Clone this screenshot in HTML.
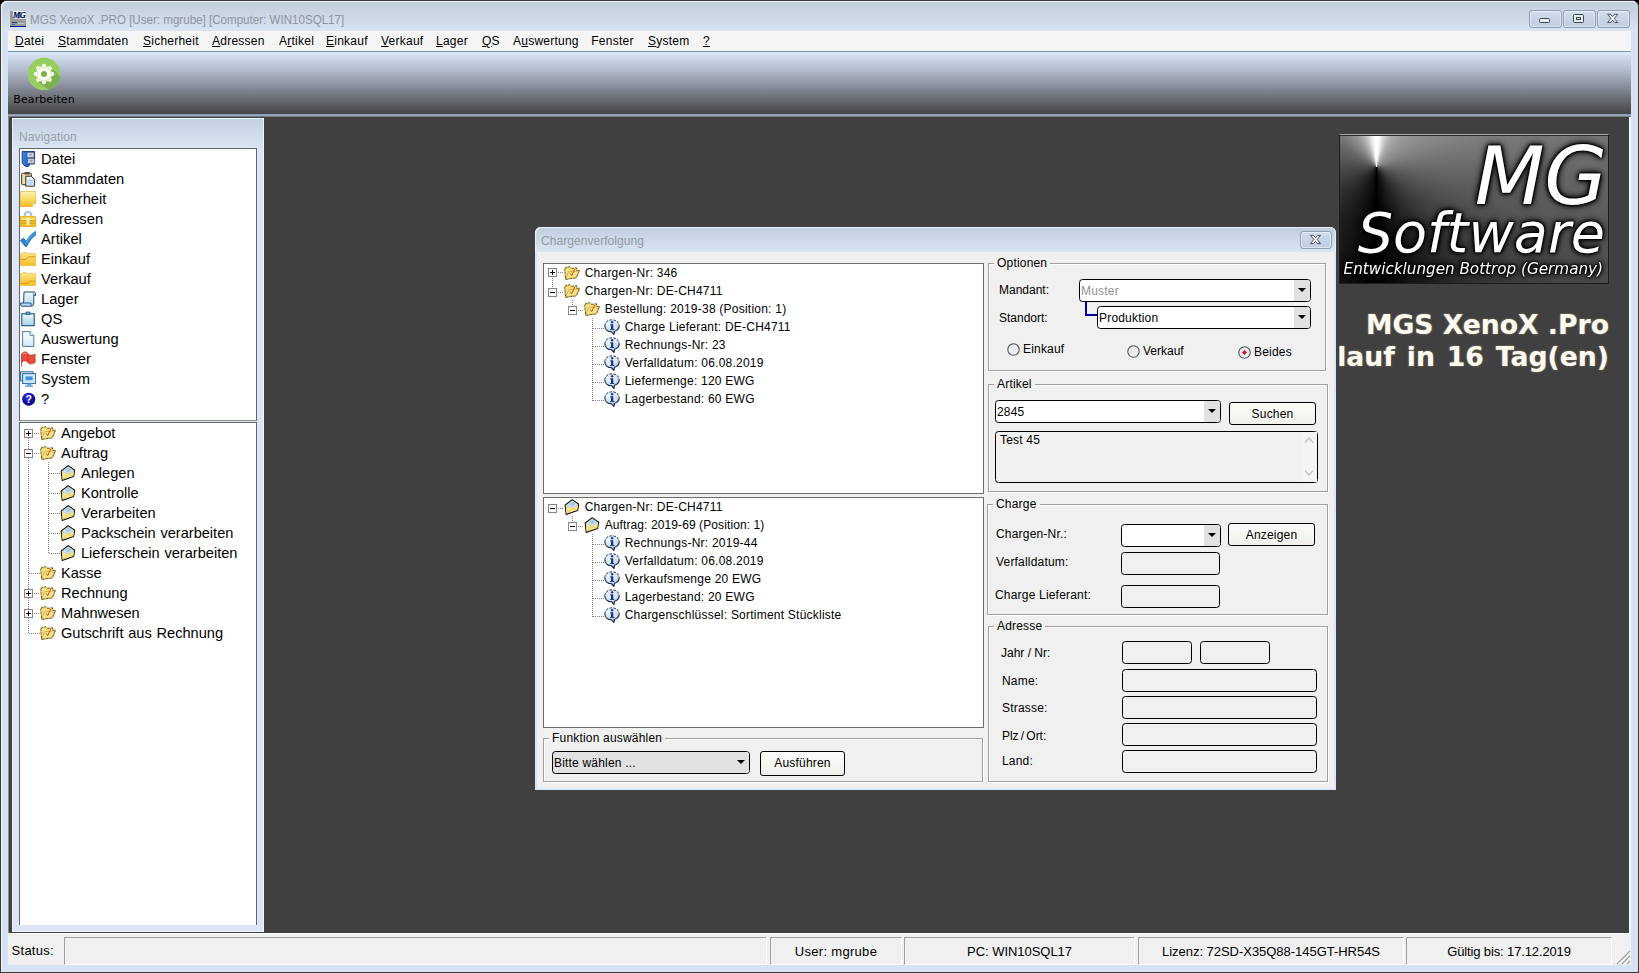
<!DOCTYPE html><html lang="de"><head><meta charset="utf-8"><title>MGS XenoX .PRO</title><style>
html,body{margin:0;padding:0}
body{width:1639px;height:973px;overflow:hidden;background:#000;position:relative;font-family:'Liberation Sans',sans-serif;font-size:12px;color:#000}
.t{position:absolute;white-space:nowrap}
div,svg{box-sizing:border-box}
.hd{position:absolute;height:1px;background:repeating-linear-gradient(90deg,#808080 0 1px,transparent 1px 2px)}
.vd{position:absolute;width:1px;background:repeating-linear-gradient(180deg,#808080 0 1px,transparent 1px 2px)}
.grp{position:absolute;border:1px solid #a0a0a0;box-shadow:inset 1px 1px 0 #fff,1px 1px 0 #fff}
.glab{position:absolute;background:#f0f0f0;white-space:nowrap;padding:0 3px;line-height:14px;height:14px;letter-spacing:0.19px}
.fld{position:absolute;border:1px solid #000;border-radius:3.5px;background:#f0f0f0}
.cmb{position:absolute;border:1px solid #000;border-radius:3.5px;background:#fff;overflow:hidden}
.cmb i{position:absolute;right:0;top:0;bottom:0;width:16px;background:#e1e1e1}
.cmb i:after{content:"";position:absolute;left:4px;top:8px;border:4px solid transparent;border-top:4px solid #000;border-bottom:none}
.btn{position:absolute;border:1px solid #000;border-radius:3px;background:linear-gradient(#fbfbf9,#f1f1ec);text-align:center;letter-spacing:0.19px}
.sp{position:absolute;top:937px;height:28px;border:1px solid;border-color:#a0a0a0 #fff #fff #a0a0a0;font-size:13px;line-height:28px;letter-spacing:-0.15px;text-align:center;white-space:nowrap}
.wb{position:absolute;top:10px;width:33px;height:18px;border:1px solid #8f9fb4;border-radius:3px;background:linear-gradient(#d2deec,#c6d4e5 50%,#c0cfe2);box-shadow:inset 0 0 0 1px rgba(255,255,255,.45)}
</style></head><body>
<div style="position:absolute;left:0px;top:0px;width:1639px;height:973px;background:#d6e3f2;border:1px solid #3a3a3a;border-radius:7px 7px 0 0;box-shadow:inset 1px 1px 0 #f4f8fc"></div>
<div style="position:absolute;left:1px;top:1px;width:1637px;height:31px;background:linear-gradient(#c0cddb,#cbd7e4 45%,#d9e5f2);border-radius:6px 6px 0 0;box-shadow:inset 1px 1px 0 #eef3f9"></div>
<svg style="position:absolute;left:10px;top:11px" width="16" height="16" viewBox="0 0 16 16"><rect x="0" y="0" width="16" height="16" fill="#9a9a9a"/><rect x="3" y="0" width="13" height="8" fill="#fff"/><rect x="0" y="15" width="16" height="1" fill="#00148c"/><rect x="2" y="11" width="5" height="1" fill="#0a4a7a"/><rect x="2" y="13" width="3" height="1" fill="#2a7a8a"/><rect x="8" y="12" width="6" height="1" fill="#c8c8c8"/><text x="3" y="7" font-family="Liberation Serif,serif" font-weight="bold" font-style="italic" font-size="8.4" fill="#000a5c" stroke="#000a5c" stroke-width="0.25" letter-spacing="-0.7">MG</text></svg>
<div class="t" style="left:30px;top:10px;font-size:12.4px;line-height:20px;color:#8e949c;transform:scaleX(0.935);transform-origin:0 0;">MGS XenoX .PRO [User: mgrube] [Computer: WIN10SQL17]</div>
<div class="wb" style="left:1529px"></div><div class="wb" style="left:1563px"></div><div class="wb" style="left:1597px"></div>
<svg style="position:absolute;left:1529px;top:10px" width="33" height="18" viewBox="0 0 33 18"><rect x="10.5" y="8.5" width="10" height="4" rx="1" fill="#e8eef6" stroke="#3f4650" stroke-width="1"/></svg>
<svg style="position:absolute;left:1563px;top:10px" width="33" height="18" viewBox="0 0 33 18"><rect x="10.5" y="4.5" width="10" height="8" rx="1" fill="#e8eef6" stroke="#3f4650"/><rect x="13.5" y="7.5" width="4" height="2" fill="#cbd8e8" stroke="#3f4650"/></svg>
<svg style="position:absolute;left:1597px;top:10px" width="33" height="18" viewBox="0 0 33 18"><g transform="translate(15.7,8.4) scale(0.92)"><path d="M-5.5 -4.5 H-2.2 L0 -2 L2.2 -4.5 H5.5 L1.9 0 L5.5 4.5 H2.2 L0 2 L-2.2 4.5 H-5.5 L-1.9 0 Z" fill="#eef2f8" stroke="#3f4650" stroke-width="1" stroke-linejoin="round"/></g></svg>
<div style="position:absolute;left:8px;top:31px;width:1623px;height:20px;background:#f5f5f5"></div>
<div style="position:absolute;left:8px;top:51px;width:1623px;height:1px;background:#7b96b6"></div>
<div class="t" style="left:15px;top:31px;font-size:12px;line-height:20px;letter-spacing:0.24px;"><u>D</u>atei</div>
<div class="t" style="left:58px;top:31px;font-size:12px;line-height:20px;letter-spacing:0.24px;"><u>S</u>tammdaten</div>
<div class="t" style="left:143px;top:31px;font-size:12px;line-height:20px;letter-spacing:0.24px;"><u>S</u>icherheit</div>
<div class="t" style="left:212px;top:31px;font-size:12px;line-height:20px;letter-spacing:0.24px;"><u>A</u>dressen</div>
<div class="t" style="left:279px;top:31px;font-size:12px;line-height:20px;letter-spacing:0.24px;">A<u>r</u>tikel</div>
<div class="t" style="left:326px;top:31px;font-size:12px;line-height:20px;letter-spacing:0.24px;"><u>E</u>inkauf</div>
<div class="t" style="left:381px;top:31px;font-size:12px;line-height:20px;letter-spacing:0.24px;"><u>V</u>erkauf</div>
<div class="t" style="left:436px;top:31px;font-size:12px;line-height:20px;letter-spacing:0.24px;"><u>L</u>ager</div>
<div class="t" style="left:482px;top:31px;font-size:12px;line-height:20px;letter-spacing:0.24px;"><u>Q</u>S</div>
<div class="t" style="left:513px;top:31px;font-size:12px;line-height:20px;letter-spacing:0.24px;">A<u>u</u>swertung</div>
<div class="t" style="left:591.3px;top:31px;font-size:12px;line-height:20px;letter-spacing:0.24px;">Fenster</div>
<div class="t" style="left:648px;top:31px;font-size:12px;line-height:20px;letter-spacing:0.24px;"><u>S</u>ystem</div>
<div class="t" style="left:703px;top:31px;font-size:12px;line-height:20px;letter-spacing:0.24px;"><u>?</u></div>
<div style="position:absolute;left:8px;top:52px;width:1623px;height:62px;background:linear-gradient(#dce9f8 0%,#c9d5e5 12%,#a9b2c1 35%,#858b96 58%,#62656b 80%,#444548 100%)"></div>
<div style="position:absolute;left:8px;top:114px;width:1623px;height:3px;background:linear-gradient(#8a96ab,#9ca9bf 45%,#8f9bb0 66%,#5b606b)"></div>
<svg style="position:absolute;left:27px;top:57px" width="34" height="34" viewBox="0 0 34 34"><circle cx="17" cy="17" r="16.3" fill="#98cd60"/><path d="M17 17 L26.5 12.5 L33.1 19.5 A16.3 16.3 0 0 1 21.5 32.7 L10 24 Z" fill="#7fb04f"/><g transform="translate(17,17)"><circle r="8" fill="#f3fde6"/><rect x="-1.9" y="-10.2" width="3.8" height="4.5" rx="1.6" fill="#f6ffec" transform="rotate(0)"/><rect x="-1.9" y="-10.2" width="3.8" height="4.5" rx="1.6" fill="#f6ffec" transform="rotate(45)"/><rect x="-1.9" y="-10.2" width="3.8" height="4.5" rx="1.6" fill="#f6ffec" transform="rotate(90)"/><rect x="-1.9" y="-10.2" width="3.8" height="4.5" rx="1.6" fill="#f6ffec" transform="rotate(135)"/><rect x="-1.9" y="-10.2" width="3.8" height="4.5" rx="1.6" fill="#f6ffec" transform="rotate(180)"/><rect x="-1.9" y="-10.2" width="3.8" height="4.5" rx="1.6" fill="#f6ffec" transform="rotate(225)"/><rect x="-1.9" y="-10.2" width="3.8" height="4.5" rx="1.6" fill="#f6ffec" transform="rotate(270)"/><rect x="-1.9" y="-10.2" width="3.8" height="4.5" rx="1.6" fill="#f6ffec" transform="rotate(315)"/><circle r="7.3" fill="#c4e6a2"/><circle r="6.6" fill="#fbfff6"/><circle r="3" fill="#7fb04f"/></g></svg>
<div class="t" style="left:13.3px;top:89.5px;font-size:11px;line-height:20px;font-family:'DejaVu Sans',sans-serif;color:#000;letter-spacing:0.1px;">Bearbeiten</div>
<div style="position:absolute;left:8px;top:117px;width:1621px;height:816px;background:#404040"></div>
<div style="position:absolute;left:1629px;top:117px;width:2px;height:816px;background:#f2f5f9"></div>
<div style="position:absolute;left:8px;top:117px;width:1px;height:816px;background:#8c8c8c"></div>
<div style="position:absolute;left:8px;top:933px;width:1623px;height:32px;background:#f0f0f0;border-top:1px solid #fcfcfc"></div>
<div class="t" style="left:11.6px;top:941px;font-size:13px;line-height:20px;letter-spacing:0.25px;">Status:</div>
<div class="sp" style="left:64px;width:703px;letter-spacing:0px"></div>
<div class="sp" style="left:770px;width:132px;letter-spacing:0.3px">User: mgrube</div>
<div class="sp" style="left:904px;width:231px;letter-spacing:-0.04px">PC: WIN10SQL17</div>
<div class="sp" style="left:1138px;width:266px;letter-spacing:-0.03px">Lizenz: 72SD-X35Q88-145GT-HR54S</div>
<div class="sp" style="left:1406px;width:206px;letter-spacing:-0.13px">Gültig bis: 17.12.2019</div>
<svg style="position:absolute;left:1616px;top:950px" width="15" height="15" viewBox="0 0 15 15"><path d="M1 14 L14 1 M6 14 L14 6 M11 14 L14 11" stroke="#a0a0a0" stroke-width="1.3" fill="none"/><path d="M2 14.6 L14.6 2 M7 14.6 L14.6 7" stroke="#fff" stroke-width="0.8" fill="none"/></svg>
<div style="position:absolute;left:12px;top:118px;width:252px;height:814px;background:linear-gradient(#c3d1e1 0,#d4e0ee 22px,#dbe5f3 30px,#dbe5f3 100%);border:1px solid #eef4fb"></div>
<div class="t" style="left:19px;top:127px;font-size:12px;line-height:20px;color:#9aa1aa;letter-spacing:0.1px;">Navigation</div>
<div style="position:absolute;left:19px;top:148px;width:238px;height:273px;background:#fff;border:1px solid #62666c;border-bottom-color:#8c8c8c"></div>
<div style="position:absolute;left:19px;top:422px;width:238px;height:503px;background:#fff;border:1px solid #62666c;border-bottom:none"></div>
<svg style="position:absolute;left:20px;top:151px" width="16" height="16" viewBox="0 0 16 16"><defs><linearGradient id="ng0" x1="0" y1="0" x2="1" y2="0"><stop offset="0" stop-color="#3f8cec"/><stop offset="0.45" stop-color="#1d5fc6"/><stop offset="1" stop-color="#123f94"/></linearGradient></defs><path d="M2.2 0.6 H14.6 V13 H10 L8.4 15.4 H5.6 L2.2 12.4 Z" fill="url(#ng0)" stroke="#0c2c6c" stroke-width="0.9" stroke-linejoin="round"/><rect x="7" y="1.3" width="7" height="5.3" fill="#c9d3e2" stroke="#53627e" stroke-width="0.7"/><rect x="7.5" y="7.4" width="7" height="5.3" fill="#c0cbdc" stroke="#53627e" stroke-width="0.7"/><rect x="9.3" y="3.2" width="2.6" height="1.1" fill="#7f8aa0"/><rect x="9.8" y="9.4" width="2.6" height="1.1" fill="#7f8aa0"/></svg>
<div class="t" style="left:41px;top:149px;font-size:14.7px;line-height:20px;">Datei</div>
<svg style="position:absolute;left:20px;top:171px" width="16" height="16" viewBox="0 0 16 16"><rect x="1.6" y="2.3" width="9.8" height="11.4" rx="0.8" fill="#f2dc9c" stroke="#3c382c" stroke-width="1"/><rect x="4.6" y="0.9" width="5" height="2.6" rx="0.6" fill="#4e4e4e"/><path d="M5.8 5.2 H11.4 L14.4 8.2 V15.2 H5.8 Z" fill="#eef6fd" stroke="#2c2c2c" stroke-width="1" stroke-linejoin="round"/><path d="M7.4 9.4 H12.8 M7.4 11.2 H12.8 M7.4 13 H12.8" stroke="#9cc4ec" stroke-width="1"/></svg>
<div class="t" style="left:41px;top:169px;font-size:14.7px;line-height:20px;">Stammdaten</div>
<svg style="position:absolute;left:20px;top:191px" width="16" height="16" viewBox="0 0 16 16"><defs><linearGradient id="ng2" x1="0" y1="0" x2="0" y2="1"><stop offset="0" stop-color="#fff3b4"/><stop offset="0.5" stop-color="#fbdc64"/><stop offset="1" stop-color="#f5b922"/></linearGradient></defs><path d="M0.3 0.4 H15.7 V12 L12.2 15.7 H0.3 Z" fill="url(#ng2)" stroke="#e2a61c" stroke-width="0.6"/><path d="M15.7 12 L12.2 12.3 L12.2 15.7 Z" fill="#fffbe6" stroke="#e2a61c" stroke-width="0.5"/></svg>
<div class="t" style="left:41px;top:189px;font-size:14.7px;line-height:20px;">Sicherheit</div>
<svg style="position:absolute;left:20px;top:211px" width="16" height="16" viewBox="0 0 16 16"><defs><linearGradient id="ng3" x1="0" y1="0" x2="0" y2="1"><stop offset="0" stop-color="#fbd24a"/><stop offset="1" stop-color="#f4bb1e"/></linearGradient></defs><path d="M4.6 6 V4.4 A3.4 3.4 0 0 1 11.4 4.4 V6" fill="none" stroke="#9fc2e2" stroke-width="2"/><rect x="0.4" y="5.4" width="15.2" height="10.2" fill="url(#ng3)" stroke="#dca416" stroke-width="0.7"/><rect x="0.8" y="9.2" width="14.4" height="1.2" fill="#dc9c0e"/><rect x="0.8" y="11.6" width="14.4" height="1.2" fill="#dc9c0e"/><rect x="0.8" y="7.6" width="14.4" height="1.2" fill="#fde9a0"/><rect x="6.6" y="7" width="2.8" height="7" fill="#fff4c8"/></svg>
<div class="t" style="left:41px;top:209px;font-size:14.7px;line-height:20px;">Adressen</div>
<svg style="position:absolute;left:20px;top:231px" width="16" height="16" viewBox="0 0 16 16"><path d="M0.4 9.6 L3.4 7 L6.2 10.4 C8.6 6 11.6 2.6 15.6 0.4 L15.9 3.8 C12 6.6 9 10.4 6.6 15.6 L5.4 15.6 Z" fill="#2b87d6" stroke="#17599e" stroke-width="0.7" stroke-linejoin="round"/><path d="M6.4 11.8 C8.6 7.6 11.4 4.2 15 1.8" fill="none" stroke="#6db6f0" stroke-width="0.9"/></svg>
<div class="t" style="left:41px;top:229px;font-size:14.7px;line-height:20px;">Artikel</div>
<svg style="position:absolute;left:20px;top:251px" width="16" height="16" viewBox="0 0 16 16"><defs><linearGradient id="ng5" x1="0" y1="0" x2="0" y2="1"><stop offset="0" stop-color="#fde78e"/><stop offset="1" stop-color="#f3bb22"/></linearGradient></defs><path d="M0.4 2.6 H2 L2.8 1.6 H7 L7.8 2.6 H15.6 V14.6 H0.4 Z" fill="url(#ng5)" stroke="#e8b02a" stroke-width="0.6"/><path d="M0.6 8.4 H5.6 L8.6 5.8 H15.4" fill="none" stroke="#dc9e14" stroke-width="1"/></svg>
<div class="t" style="left:41px;top:249px;font-size:14.7px;line-height:20px;">Einkauf</div>
<svg style="position:absolute;left:20px;top:271px" width="16" height="16" viewBox="0 0 16 16"><defs><linearGradient id="ng6" x1="0" y1="0" x2="0" y2="1"><stop offset="0" stop-color="#fde78e"/><stop offset="1" stop-color="#f3bb22"/></linearGradient></defs><path d="M0.4 2.6 H2 L2.8 1.6 H7 L7.8 2.6 H15.6 V14.6 H0.4 Z" fill="url(#ng6)" stroke="#e8b02a" stroke-width="0.6"/><path d="M0.6 12.4 H7.6 L9.8 10.2 H15.4" fill="none" stroke="#dc9e14" stroke-width="1"/></svg>
<div class="t" style="left:41px;top:269px;font-size:14.7px;line-height:20px;">Verkauf</div>
<svg style="position:absolute;left:20px;top:291px" width="16" height="16" viewBox="0 0 16 16"><defs><linearGradient id="ng7" x1="0" y1="0" x2="0" y2="1"><stop offset="0" stop-color="#f2f9fe"/><stop offset="1" stop-color="#b4d6f0"/></linearGradient></defs><path d="M4 1 H14.2 Q16 1.2 15.6 4.4 H13.8 V12 Q13.6 15 11.4 15.2 H2 Q0.2 15 0.6 12 H3.6 Z" fill="url(#ng7)" stroke="#1c4c7c" stroke-width="1" stroke-linejoin="round"/><path d="M3.6 12 H11 Q10.6 14.4 11.6 15" fill="none" stroke="#1c4c7c" stroke-width="0.9"/><path d="M13.8 4.4 V2.4" stroke="#1c4c7c" stroke-width="0.8"/></svg>
<div class="t" style="left:41px;top:289px;font-size:14.7px;line-height:20px;">Lager</div>
<svg style="position:absolute;left:20px;top:311px" width="16" height="16" viewBox="0 0 16 16"><defs><linearGradient id="ng8" x1="0" y1="0" x2="0" y2="1"><stop offset="0" stop-color="#eef7fd"/><stop offset="1" stop-color="#a9d2ee"/></linearGradient></defs><rect x="0.6" y="1.6" width="14.8" height="14" fill="#f2e9a6"/><rect x="1.8" y="2.8" width="12.4" height="11.8" fill="url(#ng8)" stroke="#2a6a9c" stroke-width="1.2"/><rect x="5.6" y="0.6" width="4.8" height="3.4" fill="#2a6a9c"/><rect x="6.8" y="1.6" width="2.4" height="1" fill="#9cc8e8"/></svg>
<div class="t" style="left:41px;top:309px;font-size:14.7px;line-height:20px;">QS</div>
<svg style="position:absolute;left:20px;top:331px" width="16" height="16" viewBox="0 0 16 16"><defs><linearGradient id="ng9" x1="0" y1="0" x2="0" y2="1"><stop offset="0" stop-color="#ffffff"/><stop offset="1" stop-color="#d4e8f8"/></linearGradient></defs><path d="M2.6 0.6 H10 L13.8 4.4 V15.4 H2.6 Z" fill="url(#ng9)" stroke="#4a7aaa" stroke-width="1"/><path d="M10 0.6 V4.4 H13.8" fill="#e4f0fa" stroke="#4a7aaa" stroke-width="0.8"/></svg>
<div class="t" style="left:41px;top:329px;font-size:14.7px;line-height:20px;">Auswertung</div>
<svg style="position:absolute;left:20px;top:351px" width="16" height="16" viewBox="0 0 16 16"><path d="M1.6 3 V15.6" stroke="#9a5a48" stroke-width="1"/><path d="M1.8 2.8 C3.6 0.4 6.4 0.2 7.8 2.4 C9.2 4.6 12 4.4 15.2 3 V11.6 C12 13.2 9.4 13.6 7.8 11.4 C6.4 9.4 4 9.6 1.8 11.2 Z" fill="#e4503e" stroke="#c2362a" stroke-width="0.6"/><path d="M7.8 2.4 V11.4" stroke="#c2362a" stroke-width="0.9"/><path d="M2.6 3.6 C4 2 5.8 1.6 7 3" fill="none" stroke="#f49a8c" stroke-width="1"/></svg>
<div class="t" style="left:41px;top:349px;font-size:14.7px;line-height:20px;">Fenster</div>
<svg style="position:absolute;left:20px;top:371px" width="16" height="16" viewBox="0 0 16 16"><rect x="0.6" y="0.8" width="12.4" height="9" fill="#e8f3fb" stroke="#2a6a9c" stroke-width="1"/><rect x="2.6" y="2.6" width="13" height="10" fill="#cfe6f8" stroke="#2a6a9c" stroke-width="1"/><rect x="5.6" y="5.4" width="7" height="3.8" fill="#3f92da"/><rect x="7" y="12.6" width="4.2" height="2" fill="#5aa6e2"/><rect x="5.2" y="14.4" width="7.8" height="1.3" fill="#3f92da"/></svg>
<div class="t" style="left:41px;top:369px;font-size:14.7px;line-height:20px;">System</div>
<svg style="position:absolute;left:20px;top:391px" width="16" height="16" viewBox="0 0 16 16"><defs><radialGradient id="ng12" cx="0.38" cy="0.32" r="0.75"><stop offset="0" stop-color="#3a3ad8"/><stop offset="0.6" stop-color="#0c0ca8"/><stop offset="1" stop-color="#04046c"/></radialGradient></defs><circle cx="8.7" cy="8.2" r="6.5" fill="url(#ng12)"/><text x="8.7" y="12" text-anchor="middle" font-family="Liberation Sans,sans-serif" font-weight="bold" font-size="10.5" fill="#fff">?</text></svg>
<div class="t" style="left:41px;top:389px;font-size:14.7px;line-height:20px;">?</div>
<svg style="position:absolute;left:24px;top:429px" width="9" height="9" viewBox="0 0 9 9"><rect x="0.5" y="0.5" width="8" height="8" fill="#fff" stroke="#848484"/><rect x="2" y="4" width="5" height="1" fill="#000"/><rect x="4" y="2" width="1" height="5" fill="#000"/></svg>
<div class="hd" style="left:34px;top:433px;width:6px"></div>
<svg style="position:absolute;left:40px;top:426px" width="16" height="14" viewBox="0 0 16 14"><path d="M0.8 3.2 L1.8 1.4 L6 0.8 L7.6 2.4 L12.6 1.8 L12.8 4.4 L15.6 4.2 L12.4 11.8 L1.6 13.4 Z" fill="#efd067" stroke="#5f5014" stroke-width="1" stroke-linejoin="round" stroke-dasharray="3.2 0.7"/><path d="M1.8 12.8 L4.6 5.8 L14.8 4.8 L12 11.4 Z" fill="#f8e48c" stroke="#a88c28" stroke-width="0.5"/><path d="M1.6 3.4 L2.4 2 L5.8 1.5 L7.2 3 L12 2.5 L12 4.4 L4.2 5.2 L1.9 11 Z" fill="#f5dc7a"/><path d="M6.1 7.5 L7.7 9.7 L10.9 2.8" fill="none" stroke="#dc4a10" stroke-width="1"/></svg>
<div class="t" style="left:61px;top:423px;font-size:14.6px;line-height:20px;word-spacing:0.7px;">Angebot</div>
<svg style="position:absolute;left:24px;top:449px" width="9" height="9" viewBox="0 0 9 9"><rect x="0.5" y="0.5" width="8" height="8" fill="#fff" stroke="#848484"/><rect x="2" y="4" width="5" height="1" fill="#000"/></svg>
<div class="hd" style="left:34px;top:453px;width:6px"></div>
<svg style="position:absolute;left:40px;top:446px" width="16" height="14" viewBox="0 0 16 14"><path d="M0.8 3.2 L1.8 1.4 L6 0.8 L7.6 2.4 L12.6 1.8 L12.8 4.4 L15.6 4.2 L12.4 11.8 L1.6 13.4 Z" fill="#efd067" stroke="#5f5014" stroke-width="1" stroke-linejoin="round" stroke-dasharray="3.2 0.7"/><path d="M1.8 12.8 L4.6 5.8 L14.8 4.8 L12 11.4 Z" fill="#f8e48c" stroke="#a88c28" stroke-width="0.5"/><path d="M1.6 3.4 L2.4 2 L5.8 1.5 L7.2 3 L12 2.5 L12 4.4 L4.2 5.2 L1.9 11 Z" fill="#f5dc7a"/><path d="M6.1 7.5 L7.7 9.7 L10.9 2.8" fill="none" stroke="#dc4a10" stroke-width="1"/></svg>
<div class="t" style="left:61px;top:443px;font-size:14.6px;line-height:20px;word-spacing:0.7px;">Auftrag</div>
<div class="hd" style="left:49px;top:473px;width:11px"></div>
<svg style="position:absolute;left:60px;top:465px" width="16" height="16" viewBox="0 0 16 16"><path d="M1.2 6 L8.2 0.8 L14.7 5.2 L13.6 11.4 L2.2 15.4 Z" fill="#f7de80" stroke="#161610" stroke-width="1.15" stroke-linejoin="round"/><path d="M2.2 6.2 L8.2 1.8 L13.6 5.4 L8.6 9.4 Z" fill="#d6e7f6" stroke="#9ab4cc" stroke-width="0.5"/><path d="M4.8 5.2 L8.3 2.6 L11.6 5 L8.4 7.8 Z" fill="#a6c9e8"/><path d="M1.8 6.6 L8.6 9.8 L14 5.8 L13.2 11 L2.6 14.6 Z" fill="#f9e48c"/><path d="M2.6 14.4 L8 9.6 M13.2 11 L8.8 9.6" stroke="#e6c65a" stroke-width="0.7" fill="none"/></svg>
<div class="t" style="left:81px;top:463px;font-size:14.6px;line-height:20px;word-spacing:0.7px;">Anlegen</div>
<div class="hd" style="left:49px;top:493px;width:11px"></div>
<svg style="position:absolute;left:60px;top:485px" width="16" height="16" viewBox="0 0 16 16"><path d="M1.2 6 L8.2 0.8 L14.7 5.2 L13.6 11.4 L2.2 15.4 Z" fill="#f7de80" stroke="#161610" stroke-width="1.15" stroke-linejoin="round"/><path d="M2.2 6.2 L8.2 1.8 L13.6 5.4 L8.6 9.4 Z" fill="#d6e7f6" stroke="#9ab4cc" stroke-width="0.5"/><path d="M4.8 5.2 L8.3 2.6 L11.6 5 L8.4 7.8 Z" fill="#a6c9e8"/><path d="M1.8 6.6 L8.6 9.8 L14 5.8 L13.2 11 L2.6 14.6 Z" fill="#f9e48c"/><path d="M2.6 14.4 L8 9.6 M13.2 11 L8.8 9.6" stroke="#e6c65a" stroke-width="0.7" fill="none"/></svg>
<div class="t" style="left:81px;top:483px;font-size:14.6px;line-height:20px;word-spacing:0.7px;">Kontrolle</div>
<div class="hd" style="left:49px;top:513px;width:11px"></div>
<svg style="position:absolute;left:60px;top:505px" width="16" height="16" viewBox="0 0 16 16"><path d="M1.2 6 L8.2 0.8 L14.7 5.2 L13.6 11.4 L2.2 15.4 Z" fill="#f7de80" stroke="#161610" stroke-width="1.15" stroke-linejoin="round"/><path d="M2.2 6.2 L8.2 1.8 L13.6 5.4 L8.6 9.4 Z" fill="#d6e7f6" stroke="#9ab4cc" stroke-width="0.5"/><path d="M4.8 5.2 L8.3 2.6 L11.6 5 L8.4 7.8 Z" fill="#a6c9e8"/><path d="M1.8 6.6 L8.6 9.8 L14 5.8 L13.2 11 L2.6 14.6 Z" fill="#f9e48c"/><path d="M2.6 14.4 L8 9.6 M13.2 11 L8.8 9.6" stroke="#e6c65a" stroke-width="0.7" fill="none"/></svg>
<div class="t" style="left:81px;top:503px;font-size:14.6px;line-height:20px;word-spacing:0.7px;">Verarbeiten</div>
<div class="hd" style="left:49px;top:533px;width:11px"></div>
<svg style="position:absolute;left:60px;top:525px" width="16" height="16" viewBox="0 0 16 16"><path d="M1.2 6 L8.2 0.8 L14.7 5.2 L13.6 11.4 L2.2 15.4 Z" fill="#f7de80" stroke="#161610" stroke-width="1.15" stroke-linejoin="round"/><path d="M2.2 6.2 L8.2 1.8 L13.6 5.4 L8.6 9.4 Z" fill="#d6e7f6" stroke="#9ab4cc" stroke-width="0.5"/><path d="M4.8 5.2 L8.3 2.6 L11.6 5 L8.4 7.8 Z" fill="#a6c9e8"/><path d="M1.8 6.6 L8.6 9.8 L14 5.8 L13.2 11 L2.6 14.6 Z" fill="#f9e48c"/><path d="M2.6 14.4 L8 9.6 M13.2 11 L8.8 9.6" stroke="#e6c65a" stroke-width="0.7" fill="none"/></svg>
<div class="t" style="left:81px;top:523px;font-size:14.6px;line-height:20px;word-spacing:0.7px;">Packschein verarbeiten</div>
<div class="hd" style="left:49px;top:553px;width:11px"></div>
<svg style="position:absolute;left:60px;top:545px" width="16" height="16" viewBox="0 0 16 16"><path d="M1.2 6 L8.2 0.8 L14.7 5.2 L13.6 11.4 L2.2 15.4 Z" fill="#f7de80" stroke="#161610" stroke-width="1.15" stroke-linejoin="round"/><path d="M2.2 6.2 L8.2 1.8 L13.6 5.4 L8.6 9.4 Z" fill="#d6e7f6" stroke="#9ab4cc" stroke-width="0.5"/><path d="M4.8 5.2 L8.3 2.6 L11.6 5 L8.4 7.8 Z" fill="#a6c9e8"/><path d="M1.8 6.6 L8.6 9.8 L14 5.8 L13.2 11 L2.6 14.6 Z" fill="#f9e48c"/><path d="M2.6 14.4 L8 9.6 M13.2 11 L8.8 9.6" stroke="#e6c65a" stroke-width="0.7" fill="none"/></svg>
<div class="t" style="left:81px;top:543px;font-size:14.6px;line-height:20px;word-spacing:0.7px;">Lieferschein verarbeiten</div>
<div class="hd" style="left:29px;top:573px;width:11px"></div>
<svg style="position:absolute;left:40px;top:566px" width="16" height="14" viewBox="0 0 16 14"><path d="M0.8 3.2 L1.8 1.4 L6 0.8 L7.6 2.4 L12.6 1.8 L12.8 4.4 L15.6 4.2 L12.4 11.8 L1.6 13.4 Z" fill="#efd067" stroke="#5f5014" stroke-width="1" stroke-linejoin="round" stroke-dasharray="3.2 0.7"/><path d="M1.8 12.8 L4.6 5.8 L14.8 4.8 L12 11.4 Z" fill="#f8e48c" stroke="#a88c28" stroke-width="0.5"/><path d="M1.6 3.4 L2.4 2 L5.8 1.5 L7.2 3 L12 2.5 L12 4.4 L4.2 5.2 L1.9 11 Z" fill="#f5dc7a"/><path d="M6.1 7.5 L7.7 9.7 L10.9 2.8" fill="none" stroke="#dc4a10" stroke-width="1"/></svg>
<div class="t" style="left:61px;top:563px;font-size:14.6px;line-height:20px;word-spacing:0.7px;">Kasse</div>
<svg style="position:absolute;left:24px;top:589px" width="9" height="9" viewBox="0 0 9 9"><rect x="0.5" y="0.5" width="8" height="8" fill="#fff" stroke="#848484"/><rect x="2" y="4" width="5" height="1" fill="#000"/><rect x="4" y="2" width="1" height="5" fill="#000"/></svg>
<div class="hd" style="left:34px;top:593px;width:6px"></div>
<svg style="position:absolute;left:40px;top:586px" width="16" height="14" viewBox="0 0 16 14"><path d="M0.8 3.2 L1.8 1.4 L6 0.8 L7.6 2.4 L12.6 1.8 L12.8 4.4 L15.6 4.2 L12.4 11.8 L1.6 13.4 Z" fill="#efd067" stroke="#5f5014" stroke-width="1" stroke-linejoin="round" stroke-dasharray="3.2 0.7"/><path d="M1.8 12.8 L4.6 5.8 L14.8 4.8 L12 11.4 Z" fill="#f8e48c" stroke="#a88c28" stroke-width="0.5"/><path d="M1.6 3.4 L2.4 2 L5.8 1.5 L7.2 3 L12 2.5 L12 4.4 L4.2 5.2 L1.9 11 Z" fill="#f5dc7a"/><path d="M6.1 7.5 L7.7 9.7 L10.9 2.8" fill="none" stroke="#dc4a10" stroke-width="1"/></svg>
<div class="t" style="left:61px;top:583px;font-size:14.6px;line-height:20px;word-spacing:0.7px;">Rechnung</div>
<svg style="position:absolute;left:24px;top:609px" width="9" height="9" viewBox="0 0 9 9"><rect x="0.5" y="0.5" width="8" height="8" fill="#fff" stroke="#848484"/><rect x="2" y="4" width="5" height="1" fill="#000"/><rect x="4" y="2" width="1" height="5" fill="#000"/></svg>
<div class="hd" style="left:34px;top:613px;width:6px"></div>
<svg style="position:absolute;left:40px;top:606px" width="16" height="14" viewBox="0 0 16 14"><path d="M0.8 3.2 L1.8 1.4 L6 0.8 L7.6 2.4 L12.6 1.8 L12.8 4.4 L15.6 4.2 L12.4 11.8 L1.6 13.4 Z" fill="#efd067" stroke="#5f5014" stroke-width="1" stroke-linejoin="round" stroke-dasharray="3.2 0.7"/><path d="M1.8 12.8 L4.6 5.8 L14.8 4.8 L12 11.4 Z" fill="#f8e48c" stroke="#a88c28" stroke-width="0.5"/><path d="M1.6 3.4 L2.4 2 L5.8 1.5 L7.2 3 L12 2.5 L12 4.4 L4.2 5.2 L1.9 11 Z" fill="#f5dc7a"/><path d="M6.1 7.5 L7.7 9.7 L10.9 2.8" fill="none" stroke="#dc4a10" stroke-width="1"/></svg>
<div class="t" style="left:61px;top:603px;font-size:14.6px;line-height:20px;word-spacing:0.7px;">Mahnwesen</div>
<div class="hd" style="left:29px;top:633px;width:11px"></div>
<svg style="position:absolute;left:40px;top:626px" width="16" height="14" viewBox="0 0 16 14"><path d="M0.8 3.2 L1.8 1.4 L6 0.8 L7.6 2.4 L12.6 1.8 L12.8 4.4 L15.6 4.2 L12.4 11.8 L1.6 13.4 Z" fill="#efd067" stroke="#5f5014" stroke-width="1" stroke-linejoin="round" stroke-dasharray="3.2 0.7"/><path d="M1.8 12.8 L4.6 5.8 L14.8 4.8 L12 11.4 Z" fill="#f8e48c" stroke="#a88c28" stroke-width="0.5"/><path d="M1.6 3.4 L2.4 2 L5.8 1.5 L7.2 3 L12 2.5 L12 4.4 L4.2 5.2 L1.9 11 Z" fill="#f5dc7a"/><path d="M6.1 7.5 L7.7 9.7 L10.9 2.8" fill="none" stroke="#dc4a10" stroke-width="1"/></svg>
<div class="t" style="left:61px;top:623px;font-size:14.6px;line-height:20px;word-spacing:0.7px;">Gutschrift aus Rechnung</div>
<div class="vd" style="left:28px;top:438px;height:11px"></div>
<div class="vd" style="left:28px;top:458px;height:131px"></div>
<div class="vd" style="left:28px;top:598px;height:11px"></div>
<div class="vd" style="left:28px;top:618px;height:16px"></div>
<div class="vd" style="left:48px;top:462px;height:92px"></div>
<div style="position:absolute;left:1339px;top:134px;width:270px;height:150px;border:1px solid #1c1c1c;border-top-color:#a8a8a8;background:conic-gradient(from 0deg at 36.5px 31.5px,#ffffff 0deg,#fcfcfc 5deg,#e8e8e8 10deg,#cccccc 16deg,#b2b2b2 24deg,#a2a2a2 34deg,#969696 45deg,#828282 70deg,#6a6a6a 90deg,#545454 110deg,#383838 135deg,#262626 150deg,#1a1a1a 160deg,#111111 168deg,#090909 174deg,#000000 180deg,#070707 186deg,#0e0e0e 192deg,#181818 205deg,#282828 225deg,#3c3c3c 250deg,#4b4b4b 270deg,#686868 300deg,#808080 315deg,#949494 326deg,#aeaeae 336deg,#cccccc 344deg,#e8e8e8 350deg,#fcfcfc 355deg,#ffffff 360deg);box-shadow:inset 0 1px 0 #2a2a2a;overflow:hidden;will-change:transform"><div style="font-family:'DejaVu Sans',sans-serif;font-style:italic;color:#fff;position:absolute;white-space:nowrap;text-align:right;text-shadow:0 0 1px #000,0 0 1px #000,0 0 2px #000,0 0 3px #000,0 0 4px #000,0 0 6px rgba(0,0,0,.9),0 0 9px rgba(0,0,0,.7);font-size:81px;line-height:90px;top:-4.5px;right:1.5px;letter-spacing:-0.5px">MG</div><div style="font-family:'DejaVu Sans',sans-serif;font-style:italic;color:#fff;position:absolute;white-space:nowrap;text-align:right;text-shadow:0 0 1px #000,0 0 1px #000,0 0 2px #000,0 0 3px #000,0 0 4px #000,0 0 6px rgba(0,0,0,.9),0 0 9px rgba(0,0,0,.7);font-size:55.6px;line-height:60px;top:67.5px;right:3px">Software</div><div style="font-family:'DejaVu Sans',sans-serif;font-style:italic;color:#fff;position:absolute;white-space:nowrap;text-align:right;text-shadow:0 0 1px #000,0 0 1px #000,0 0 2px #000,0 0 3px #000,0 0 4px #000,0 0 6px rgba(0,0,0,.9),0 0 9px rgba(0,0,0,.7);font-size:15.2px;line-height:20px;top:124px;right:5px">Entwicklungen Bottrop (Germany)</div></div>
<div class="t" style="left:1339px;width:270px;text-align:right;top:308px;font:bold 26.67px/34px 'DejaVu Sans',sans-serif;color:#fffaf0;text-shadow:0 0 2px rgba(255,240,200,.45);">MGS XenoX .Pro</div>
<div style="position:absolute;left:1339px;top:340px;width:270px;height:34px;overflow:hidden"><div class="t" style="right:0;top:0;font:bold 26.67px/34px 'DejaVu Sans',sans-serif;color:#fffaf0;word-spacing:2.6px;text-shadow:0 0 2px rgba(255,240,200,.45);">lauf in 16 Tag(en)</div></div>
<div style="position:absolute;left:535px;top:227px;width:801px;height:563px;background:#f0f0f0;border-radius:6px 6px 0 0;border:2px solid #dbe6f3;border-top:none;"></div>
<div style="position:absolute;left:535px;top:227px;width:801px;height:25px;background:linear-gradient(#bfcee0,#cbd8e8 45%,#d9e5f3);border-radius:6px 6px 0 0;box-shadow:inset 1px 1px 0 #e6eef7,inset -1px 0 0 #e6eef7"></div>
<div class="t" style="left:541px;top:231px;font-size:12px;line-height:20px;color:#939aa3;letter-spacing:0.05px;">Chargenverfolgung</div>
<div class="wb" style="left:1300px;top:231px;width:32px"></div>
<svg style="position:absolute;left:1300px;top:231px" width="32" height="18" viewBox="0 0 32 18"><g transform="translate(15.5,8.5) scale(0.92)"><path d="M-5.5 -4.5 H-2.2 L0 -2 L2.2 -4.5 H5.5 L1.9 0 L5.5 4.5 H2.2 L0 2 L-2.2 4.5 H-5.5 L-1.9 0 Z" fill="#eef2f8" stroke="#3f4650" stroke-width="1" stroke-linejoin="round"/></g></svg>
<div style="position:absolute;left:543px;top:263px;width:441px;height:231px;background:#fff;border:1px solid #6c6c6c"></div>
<div style="position:absolute;left:543px;top:497px;width:441px;height:231px;background:#fff;border:1px solid #6c6c6c"></div>
<svg style="position:absolute;left:548px;top:268px" width="9" height="9" viewBox="0 0 9 9"><rect x="0.5" y="0.5" width="8" height="8" fill="#fff" stroke="#848484"/><rect x="2" y="4" width="5" height="1" fill="#000"/><rect x="4" y="2" width="1" height="5" fill="#000"/></svg><div class="hd" style="left:558px;top:272px;width:6px"></div><svg style="position:absolute;left:564px;top:266px" width="16" height="14" viewBox="0 0 16 14"><path d="M0.8 3.2 L1.8 1.4 L6 0.8 L7.6 2.4 L12.6 1.8 L12.8 4.4 L15.6 4.2 L12.4 11.8 L1.6 13.4 Z" fill="#efd067" stroke="#5f5014" stroke-width="1" stroke-linejoin="round" stroke-dasharray="3.2 0.7"/><path d="M1.8 12.8 L4.6 5.8 L14.8 4.8 L12 11.4 Z" fill="#f8e48c" stroke="#a88c28" stroke-width="0.5"/><path d="M1.6 3.4 L2.4 2 L5.8 1.5 L7.2 3 L12 2.5 L12 4.4 L4.2 5.2 L1.9 11 Z" fill="#f5dc7a"/><path d="M6.1 7.5 L7.7 9.7 L10.9 2.8" fill="none" stroke="#dc4a10" stroke-width="1"/></svg><div class="t" style="left:584.7px;top:263px;font-size:12px;line-height:20px;letter-spacing:0.23px;">Chargen-Nr: 346</div><svg style="position:absolute;left:548px;top:288px" width="9" height="9" viewBox="0 0 9 9"><rect x="0.5" y="0.5" width="8" height="8" fill="#fff" stroke="#848484"/><rect x="2" y="4" width="5" height="1" fill="#000"/></svg><div class="hd" style="left:558px;top:292px;width:6px"></div><svg style="position:absolute;left:564px;top:284px" width="16" height="14" viewBox="0 0 16 14"><path d="M0.8 3.2 L1.8 1.4 L6 0.8 L7.6 2.4 L12.6 1.8 L12.8 4.4 L15.6 4.2 L12.4 11.8 L1.6 13.4 Z" fill="#efd067" stroke="#5f5014" stroke-width="1" stroke-linejoin="round" stroke-dasharray="3.2 0.7"/><path d="M1.8 12.8 L4.6 5.8 L14.8 4.8 L12 11.4 Z" fill="#f8e48c" stroke="#a88c28" stroke-width="0.5"/><path d="M1.6 3.4 L2.4 2 L5.8 1.5 L7.2 3 L12 2.5 L12 4.4 L4.2 5.2 L1.9 11 Z" fill="#f5dc7a"/><path d="M6.1 7.5 L7.7 9.7 L10.9 2.8" fill="none" stroke="#dc4a10" stroke-width="1"/></svg><div class="t" style="left:584.7px;top:281px;font-size:12px;line-height:20px;letter-spacing:0.23px;">Chargen-Nr: DE-CH4711</div><svg style="position:absolute;left:568px;top:306px" width="9" height="9" viewBox="0 0 9 9"><rect x="0.5" y="0.5" width="8" height="8" fill="#fff" stroke="#848484"/><rect x="2" y="4" width="5" height="1" fill="#000"/></svg><div class="hd" style="left:578px;top:310px;width:6px"></div><svg style="position:absolute;left:584px;top:302px" width="16" height="14" viewBox="0 0 16 14"><path d="M0.8 3.2 L1.8 1.4 L6 0.8 L7.6 2.4 L12.6 1.8 L12.8 4.4 L15.6 4.2 L12.4 11.8 L1.6 13.4 Z" fill="#efd067" stroke="#5f5014" stroke-width="1" stroke-linejoin="round" stroke-dasharray="3.2 0.7"/><path d="M1.8 12.8 L4.6 5.8 L14.8 4.8 L12 11.4 Z" fill="#f8e48c" stroke="#a88c28" stroke-width="0.5"/><path d="M1.6 3.4 L2.4 2 L5.8 1.5 L7.2 3 L12 2.5 L12 4.4 L4.2 5.2 L1.9 11 Z" fill="#f5dc7a"/><path d="M6.1 7.5 L7.7 9.7 L10.9 2.8" fill="none" stroke="#dc4a10" stroke-width="1"/></svg><div class="t" style="left:604.7px;top:299px;font-size:12px;line-height:20px;letter-spacing:0.23px;">Bestellung: 2019-38 (Position: 1)</div><div class="hd" style="left:593px;top:328px;width:11px"></div><svg style="position:absolute;left:604px;top:319px" width="16" height="16" viewBox="0 0 16 16"><defs><radialGradient id="gi1" cx="0.42" cy="0.3" r="0.75"><stop offset="0" stop-color="#f8fbfe"/><stop offset="0.55" stop-color="#d3e2f4"/><stop offset="1" stop-color="#8dafdb"/></radialGradient></defs><path d="M8 0.8 C12.2 0.8 15.2 3.4 15.2 6.8 C15.2 9.4 13.4 11.4 10.6 12.3 L9.9 15.4 L7.6 12.8 C3.6 12.6 0.8 10.2 0.8 6.8 C0.8 3.4 3.8 0.8 8 0.8 Z" fill="url(#gi1)"/><path d="M0.8 6.8 C0.8 3.4 3.8 0.8 8 0.8 C12.2 0.8 15.2 3.4 15.2 6.8" fill="none" stroke="#2a3a5a" stroke-width="1" stroke-dasharray="2.6 1.3"/><path d="M15.2 6.8 C15.2 9.4 13.4 11.4 10.6 12.3 L9.9 15.4 L7.6 12.8 C3.6 12.6 0.8 10.2 0.8 6.8" fill="none" stroke="#1c2740" stroke-width="1.15"/><circle cx="8.1" cy="3.3" r="1.2" fill="#173a8e"/><path d="M6.2 5.3 H9.3 V10 H10.2 V11.1 H6.1 V10 H7 V6.4 H6.2 Z" fill="#173a8e"/></svg><div class="t" style="left:624.7px;top:317px;font-size:12px;line-height:20px;letter-spacing:0.23px;">Charge Lieferant: DE-CH4711</div><div class="hd" style="left:593px;top:346px;width:11px"></div><svg style="position:absolute;left:604px;top:337px" width="16" height="16" viewBox="0 0 16 16"><defs><radialGradient id="gi2" cx="0.42" cy="0.3" r="0.75"><stop offset="0" stop-color="#f8fbfe"/><stop offset="0.55" stop-color="#d3e2f4"/><stop offset="1" stop-color="#8dafdb"/></radialGradient></defs><path d="M8 0.8 C12.2 0.8 15.2 3.4 15.2 6.8 C15.2 9.4 13.4 11.4 10.6 12.3 L9.9 15.4 L7.6 12.8 C3.6 12.6 0.8 10.2 0.8 6.8 C0.8 3.4 3.8 0.8 8 0.8 Z" fill="url(#gi2)"/><path d="M0.8 6.8 C0.8 3.4 3.8 0.8 8 0.8 C12.2 0.8 15.2 3.4 15.2 6.8" fill="none" stroke="#2a3a5a" stroke-width="1" stroke-dasharray="2.6 1.3"/><path d="M15.2 6.8 C15.2 9.4 13.4 11.4 10.6 12.3 L9.9 15.4 L7.6 12.8 C3.6 12.6 0.8 10.2 0.8 6.8" fill="none" stroke="#1c2740" stroke-width="1.15"/><circle cx="8.1" cy="3.3" r="1.2" fill="#173a8e"/><path d="M6.2 5.3 H9.3 V10 H10.2 V11.1 H6.1 V10 H7 V6.4 H6.2 Z" fill="#173a8e"/></svg><div class="t" style="left:624.7px;top:335px;font-size:12px;line-height:20px;letter-spacing:0.23px;">Rechnungs-Nr: 23</div><div class="hd" style="left:593px;top:364px;width:11px"></div><svg style="position:absolute;left:604px;top:355px" width="16" height="16" viewBox="0 0 16 16"><defs><radialGradient id="gi3" cx="0.42" cy="0.3" r="0.75"><stop offset="0" stop-color="#f8fbfe"/><stop offset="0.55" stop-color="#d3e2f4"/><stop offset="1" stop-color="#8dafdb"/></radialGradient></defs><path d="M8 0.8 C12.2 0.8 15.2 3.4 15.2 6.8 C15.2 9.4 13.4 11.4 10.6 12.3 L9.9 15.4 L7.6 12.8 C3.6 12.6 0.8 10.2 0.8 6.8 C0.8 3.4 3.8 0.8 8 0.8 Z" fill="url(#gi3)"/><path d="M0.8 6.8 C0.8 3.4 3.8 0.8 8 0.8 C12.2 0.8 15.2 3.4 15.2 6.8" fill="none" stroke="#2a3a5a" stroke-width="1" stroke-dasharray="2.6 1.3"/><path d="M15.2 6.8 C15.2 9.4 13.4 11.4 10.6 12.3 L9.9 15.4 L7.6 12.8 C3.6 12.6 0.8 10.2 0.8 6.8" fill="none" stroke="#1c2740" stroke-width="1.15"/><circle cx="8.1" cy="3.3" r="1.2" fill="#173a8e"/><path d="M6.2 5.3 H9.3 V10 H10.2 V11.1 H6.1 V10 H7 V6.4 H6.2 Z" fill="#173a8e"/></svg><div class="t" style="left:624.7px;top:353px;font-size:12px;line-height:20px;letter-spacing:0.23px;">Verfalldatum: 06.08.2019</div><div class="hd" style="left:593px;top:382px;width:11px"></div><svg style="position:absolute;left:604px;top:373px" width="16" height="16" viewBox="0 0 16 16"><defs><radialGradient id="gi4" cx="0.42" cy="0.3" r="0.75"><stop offset="0" stop-color="#f8fbfe"/><stop offset="0.55" stop-color="#d3e2f4"/><stop offset="1" stop-color="#8dafdb"/></radialGradient></defs><path d="M8 0.8 C12.2 0.8 15.2 3.4 15.2 6.8 C15.2 9.4 13.4 11.4 10.6 12.3 L9.9 15.4 L7.6 12.8 C3.6 12.6 0.8 10.2 0.8 6.8 C0.8 3.4 3.8 0.8 8 0.8 Z" fill="url(#gi4)"/><path d="M0.8 6.8 C0.8 3.4 3.8 0.8 8 0.8 C12.2 0.8 15.2 3.4 15.2 6.8" fill="none" stroke="#2a3a5a" stroke-width="1" stroke-dasharray="2.6 1.3"/><path d="M15.2 6.8 C15.2 9.4 13.4 11.4 10.6 12.3 L9.9 15.4 L7.6 12.8 C3.6 12.6 0.8 10.2 0.8 6.8" fill="none" stroke="#1c2740" stroke-width="1.15"/><circle cx="8.1" cy="3.3" r="1.2" fill="#173a8e"/><path d="M6.2 5.3 H9.3 V10 H10.2 V11.1 H6.1 V10 H7 V6.4 H6.2 Z" fill="#173a8e"/></svg><div class="t" style="left:624.7px;top:371px;font-size:12px;line-height:20px;letter-spacing:0.23px;">Liefermenge: 120 EWG</div><div class="hd" style="left:593px;top:400px;width:11px"></div><svg style="position:absolute;left:604px;top:391px" width="16" height="16" viewBox="0 0 16 16"><defs><radialGradient id="gi5" cx="0.42" cy="0.3" r="0.75"><stop offset="0" stop-color="#f8fbfe"/><stop offset="0.55" stop-color="#d3e2f4"/><stop offset="1" stop-color="#8dafdb"/></radialGradient></defs><path d="M8 0.8 C12.2 0.8 15.2 3.4 15.2 6.8 C15.2 9.4 13.4 11.4 10.6 12.3 L9.9 15.4 L7.6 12.8 C3.6 12.6 0.8 10.2 0.8 6.8 C0.8 3.4 3.8 0.8 8 0.8 Z" fill="url(#gi5)"/><path d="M0.8 6.8 C0.8 3.4 3.8 0.8 8 0.8 C12.2 0.8 15.2 3.4 15.2 6.8" fill="none" stroke="#2a3a5a" stroke-width="1" stroke-dasharray="2.6 1.3"/><path d="M15.2 6.8 C15.2 9.4 13.4 11.4 10.6 12.3 L9.9 15.4 L7.6 12.8 C3.6 12.6 0.8 10.2 0.8 6.8" fill="none" stroke="#1c2740" stroke-width="1.15"/><circle cx="8.1" cy="3.3" r="1.2" fill="#173a8e"/><path d="M6.2 5.3 H9.3 V10 H10.2 V11.1 H6.1 V10 H7 V6.4 H6.2 Z" fill="#173a8e"/></svg><div class="t" style="left:624.7px;top:389px;font-size:12px;line-height:20px;letter-spacing:0.23px;">Lagerbestand: 60 EWG</div>
<div class="vd" style="left:552px;top:278px;height:10px"></div>
<div class="vd" style="left:572px;top:300px;height:6px"></div>
<div class="vd" style="left:592px;top:318px;height:83px"></div>
<svg style="position:absolute;left:548px;top:504px" width="9" height="9" viewBox="0 0 9 9"><rect x="0.5" y="0.5" width="8" height="8" fill="#fff" stroke="#848484"/><rect x="2" y="4" width="5" height="1" fill="#000"/></svg><div class="hd" style="left:558px;top:508px;width:6px"></div><svg style="position:absolute;left:564px;top:499px" width="16" height="16" viewBox="0 0 16 16"><path d="M1.2 6 L8.2 0.8 L14.7 5.2 L13.6 11.4 L2.2 15.4 Z" fill="#f7de80" stroke="#161610" stroke-width="1.15" stroke-linejoin="round"/><path d="M2.2 6.2 L8.2 1.8 L13.6 5.4 L8.6 9.4 Z" fill="#d6e7f6" stroke="#9ab4cc" stroke-width="0.5"/><path d="M4.8 5.2 L8.3 2.6 L11.6 5 L8.4 7.8 Z" fill="#a6c9e8"/><path d="M1.8 6.6 L8.6 9.8 L14 5.8 L13.2 11 L2.6 14.6 Z" fill="#f9e48c"/><path d="M2.6 14.4 L8 9.6 M13.2 11 L8.8 9.6" stroke="#e6c65a" stroke-width="0.7" fill="none"/></svg><div class="t" style="left:584.7px;top:497px;font-size:12px;line-height:20px;letter-spacing:0.23px;">Chargen-Nr: DE-CH4711</div><svg style="position:absolute;left:568px;top:522px" width="9" height="9" viewBox="0 0 9 9"><rect x="0.5" y="0.5" width="8" height="8" fill="#fff" stroke="#848484"/><rect x="2" y="4" width="5" height="1" fill="#000"/></svg><div class="hd" style="left:578px;top:526px;width:6px"></div><svg style="position:absolute;left:584px;top:517px" width="16" height="16" viewBox="0 0 16 16"><path d="M1.2 6 L8.2 0.8 L14.7 5.2 L13.6 11.4 L2.2 15.4 Z" fill="#f7de80" stroke="#161610" stroke-width="1.15" stroke-linejoin="round"/><path d="M2.2 6.2 L8.2 1.8 L13.6 5.4 L8.6 9.4 Z" fill="#d6e7f6" stroke="#9ab4cc" stroke-width="0.5"/><path d="M4.8 5.2 L8.3 2.6 L11.6 5 L8.4 7.8 Z" fill="#a6c9e8"/><path d="M1.8 6.6 L8.6 9.8 L14 5.8 L13.2 11 L2.6 14.6 Z" fill="#f9e48c"/><path d="M2.6 14.4 L8 9.6 M13.2 11 L8.8 9.6" stroke="#e6c65a" stroke-width="0.7" fill="none"/></svg><div class="t" style="left:604.7px;top:515px;font-size:12px;line-height:20px;letter-spacing:0.1px;">Auftrag: 2019-69 (Position: 1)</div><div class="hd" style="left:593px;top:544px;width:11px"></div><svg style="position:absolute;left:604px;top:535px" width="16" height="16" viewBox="0 0 16 16"><defs><radialGradient id="gi6" cx="0.42" cy="0.3" r="0.75"><stop offset="0" stop-color="#f8fbfe"/><stop offset="0.55" stop-color="#d3e2f4"/><stop offset="1" stop-color="#8dafdb"/></radialGradient></defs><path d="M8 0.8 C12.2 0.8 15.2 3.4 15.2 6.8 C15.2 9.4 13.4 11.4 10.6 12.3 L9.9 15.4 L7.6 12.8 C3.6 12.6 0.8 10.2 0.8 6.8 C0.8 3.4 3.8 0.8 8 0.8 Z" fill="url(#gi6)"/><path d="M0.8 6.8 C0.8 3.4 3.8 0.8 8 0.8 C12.2 0.8 15.2 3.4 15.2 6.8" fill="none" stroke="#2a3a5a" stroke-width="1" stroke-dasharray="2.6 1.3"/><path d="M15.2 6.8 C15.2 9.4 13.4 11.4 10.6 12.3 L9.9 15.4 L7.6 12.8 C3.6 12.6 0.8 10.2 0.8 6.8" fill="none" stroke="#1c2740" stroke-width="1.15"/><circle cx="8.1" cy="3.3" r="1.2" fill="#173a8e"/><path d="M6.2 5.3 H9.3 V10 H10.2 V11.1 H6.1 V10 H7 V6.4 H6.2 Z" fill="#173a8e"/></svg><div class="t" style="left:624.7px;top:533px;font-size:12px;line-height:20px;letter-spacing:0.23px;">Rechnungs-Nr: 2019-44</div><div class="hd" style="left:593px;top:562px;width:11px"></div><svg style="position:absolute;left:604px;top:553px" width="16" height="16" viewBox="0 0 16 16"><defs><radialGradient id="gi7" cx="0.42" cy="0.3" r="0.75"><stop offset="0" stop-color="#f8fbfe"/><stop offset="0.55" stop-color="#d3e2f4"/><stop offset="1" stop-color="#8dafdb"/></radialGradient></defs><path d="M8 0.8 C12.2 0.8 15.2 3.4 15.2 6.8 C15.2 9.4 13.4 11.4 10.6 12.3 L9.9 15.4 L7.6 12.8 C3.6 12.6 0.8 10.2 0.8 6.8 C0.8 3.4 3.8 0.8 8 0.8 Z" fill="url(#gi7)"/><path d="M0.8 6.8 C0.8 3.4 3.8 0.8 8 0.8 C12.2 0.8 15.2 3.4 15.2 6.8" fill="none" stroke="#2a3a5a" stroke-width="1" stroke-dasharray="2.6 1.3"/><path d="M15.2 6.8 C15.2 9.4 13.4 11.4 10.6 12.3 L9.9 15.4 L7.6 12.8 C3.6 12.6 0.8 10.2 0.8 6.8" fill="none" stroke="#1c2740" stroke-width="1.15"/><circle cx="8.1" cy="3.3" r="1.2" fill="#173a8e"/><path d="M6.2 5.3 H9.3 V10 H10.2 V11.1 H6.1 V10 H7 V6.4 H6.2 Z" fill="#173a8e"/></svg><div class="t" style="left:624.7px;top:551px;font-size:12px;line-height:20px;letter-spacing:0.23px;">Verfalldatum: 06.08.2019</div><div class="hd" style="left:593px;top:580px;width:11px"></div><svg style="position:absolute;left:604px;top:571px" width="16" height="16" viewBox="0 0 16 16"><defs><radialGradient id="gi8" cx="0.42" cy="0.3" r="0.75"><stop offset="0" stop-color="#f8fbfe"/><stop offset="0.55" stop-color="#d3e2f4"/><stop offset="1" stop-color="#8dafdb"/></radialGradient></defs><path d="M8 0.8 C12.2 0.8 15.2 3.4 15.2 6.8 C15.2 9.4 13.4 11.4 10.6 12.3 L9.9 15.4 L7.6 12.8 C3.6 12.6 0.8 10.2 0.8 6.8 C0.8 3.4 3.8 0.8 8 0.8 Z" fill="url(#gi8)"/><path d="M0.8 6.8 C0.8 3.4 3.8 0.8 8 0.8 C12.2 0.8 15.2 3.4 15.2 6.8" fill="none" stroke="#2a3a5a" stroke-width="1" stroke-dasharray="2.6 1.3"/><path d="M15.2 6.8 C15.2 9.4 13.4 11.4 10.6 12.3 L9.9 15.4 L7.6 12.8 C3.6 12.6 0.8 10.2 0.8 6.8" fill="none" stroke="#1c2740" stroke-width="1.15"/><circle cx="8.1" cy="3.3" r="1.2" fill="#173a8e"/><path d="M6.2 5.3 H9.3 V10 H10.2 V11.1 H6.1 V10 H7 V6.4 H6.2 Z" fill="#173a8e"/></svg><div class="t" style="left:624.7px;top:569px;font-size:12px;line-height:20px;letter-spacing:0.23px;">Verkaufsmenge 20 EWG</div><div class="hd" style="left:593px;top:598px;width:11px"></div><svg style="position:absolute;left:604px;top:589px" width="16" height="16" viewBox="0 0 16 16"><defs><radialGradient id="gi9" cx="0.42" cy="0.3" r="0.75"><stop offset="0" stop-color="#f8fbfe"/><stop offset="0.55" stop-color="#d3e2f4"/><stop offset="1" stop-color="#8dafdb"/></radialGradient></defs><path d="M8 0.8 C12.2 0.8 15.2 3.4 15.2 6.8 C15.2 9.4 13.4 11.4 10.6 12.3 L9.9 15.4 L7.6 12.8 C3.6 12.6 0.8 10.2 0.8 6.8 C0.8 3.4 3.8 0.8 8 0.8 Z" fill="url(#gi9)"/><path d="M0.8 6.8 C0.8 3.4 3.8 0.8 8 0.8 C12.2 0.8 15.2 3.4 15.2 6.8" fill="none" stroke="#2a3a5a" stroke-width="1" stroke-dasharray="2.6 1.3"/><path d="M15.2 6.8 C15.2 9.4 13.4 11.4 10.6 12.3 L9.9 15.4 L7.6 12.8 C3.6 12.6 0.8 10.2 0.8 6.8" fill="none" stroke="#1c2740" stroke-width="1.15"/><circle cx="8.1" cy="3.3" r="1.2" fill="#173a8e"/><path d="M6.2 5.3 H9.3 V10 H10.2 V11.1 H6.1 V10 H7 V6.4 H6.2 Z" fill="#173a8e"/></svg><div class="t" style="left:624.7px;top:587px;font-size:12px;line-height:20px;letter-spacing:0.23px;">Lagerbestand: 20 EWG</div><div class="hd" style="left:593px;top:616px;width:11px"></div><svg style="position:absolute;left:604px;top:607px" width="16" height="16" viewBox="0 0 16 16"><defs><radialGradient id="gi10" cx="0.42" cy="0.3" r="0.75"><stop offset="0" stop-color="#f8fbfe"/><stop offset="0.55" stop-color="#d3e2f4"/><stop offset="1" stop-color="#8dafdb"/></radialGradient></defs><path d="M8 0.8 C12.2 0.8 15.2 3.4 15.2 6.8 C15.2 9.4 13.4 11.4 10.6 12.3 L9.9 15.4 L7.6 12.8 C3.6 12.6 0.8 10.2 0.8 6.8 C0.8 3.4 3.8 0.8 8 0.8 Z" fill="url(#gi10)"/><path d="M0.8 6.8 C0.8 3.4 3.8 0.8 8 0.8 C12.2 0.8 15.2 3.4 15.2 6.8" fill="none" stroke="#2a3a5a" stroke-width="1" stroke-dasharray="2.6 1.3"/><path d="M15.2 6.8 C15.2 9.4 13.4 11.4 10.6 12.3 L9.9 15.4 L7.6 12.8 C3.6 12.6 0.8 10.2 0.8 6.8" fill="none" stroke="#1c2740" stroke-width="1.15"/><circle cx="8.1" cy="3.3" r="1.2" fill="#173a8e"/><path d="M6.2 5.3 H9.3 V10 H10.2 V11.1 H6.1 V10 H7 V6.4 H6.2 Z" fill="#173a8e"/></svg><div class="t" style="left:624.7px;top:605px;font-size:12px;line-height:20px;letter-spacing:0.23px;">Chargenschlüssel: Sortiment Stückliste</div>
<div class="vd" style="left:572px;top:516px;height:6px"></div>
<div class="vd" style="left:592px;top:534px;height:83px"></div>
<div class="grp" style="left:543px;top:738px;width:440px;height:44px"></div><div class="glab" style="left:549px;top:731px">Funktion auswählen</div>
<div class="cmb" style="left:552px;top:751px;width:198px;height:23px;background:#e1e1e1"><i></i></div>
<div class="t" style="left:554px;top:753px;font-size:12px;line-height:20px;letter-spacing:0.19px;">Bitte wählen ...</div>
<div class="btn" style="left:760px;top:751px;width:85px;height:25px;line-height:23px">Ausführen</div>
<div class="grp" style="left:988px;top:263px;width:338px;height:108px"></div><div class="glab" style="left:994px;top:256px">Optionen</div>
<div class="t" style="left:999px;top:280px;font-size:12px;line-height:20px;">Mandant:</div>
<div class="t" style="left:999px;top:308px;font-size:12px;line-height:20px;">Standort:</div>
<div style="position:absolute;left:1085px;top:301px;width:2px;height:15px;background:#0000a0"></div>
<div style="position:absolute;left:1085px;top:314px;width:13px;height:2px;background:#0000a0"></div>
<div class="cmb" style="left:1079px;top:279px;width:232px;height:23px"><i></i></div>
<div class="t" style="left:1081px;top:281px;font-size:12px;line-height:20px;color:#939393;letter-spacing:0.19px;">Muster</div>
<div class="cmb" style="left:1097px;top:306px;width:214px;height:23px"><i></i></div>
<div class="t" style="left:1099px;top:308px;font-size:12px;line-height:20px;letter-spacing:0.19px;">Produktion</div>
<svg style="position:absolute;left:1007.0px;top:343.0px" width="13" height="13" viewBox="0 0 13 13"><circle cx="6.5" cy="6.5" r="6.4" fill="#e6eef6" opacity="0.8"/><circle cx="6.5" cy="6.5" r="5.7" fill="#efefef" stroke="#46525f" stroke-width="1.05"/><circle cx="5.6" cy="5.6" r="3" fill="#e6e6e6" opacity="0.6"/></svg>
<div class="t" style="left:1023px;top:339px;font-size:12px;line-height:20px;letter-spacing:0.19px;">Einkauf</div>
<svg style="position:absolute;left:1126.5px;top:345.0px" width="13" height="13" viewBox="0 0 13 13"><circle cx="6.5" cy="6.5" r="6.4" fill="#e6eef6" opacity="0.8"/><circle cx="6.5" cy="6.5" r="5.7" fill="#efefef" stroke="#46525f" stroke-width="1.05"/><circle cx="5.6" cy="5.6" r="3" fill="#e6e6e6" opacity="0.6"/></svg>
<div class="t" style="left:1143px;top:341px;font-size:12px;line-height:20px;">Verkauf</div>
<svg style="position:absolute;left:1237.5px;top:346.0px" width="13" height="13" viewBox="0 0 13 13"><circle cx="6.5" cy="6.5" r="6.4" fill="#e6eef6" opacity="0.8"/><circle cx="6.5" cy="6.5" r="5.7" fill="#efefef" stroke="#46525f" stroke-width="1.05"/><circle cx="5.6" cy="5.6" r="3" fill="#e6e6e6" opacity="0.6"/><path d="M6.5 4 L9 6.5 L6.5 9 L4 6.5 Z" fill="#d01818"/></svg>
<div class="t" style="left:1254px;top:342px;font-size:12px;line-height:20px;letter-spacing:0.19px;">Beides</div>
<div class="grp" style="left:988px;top:384px;width:340px;height:108px"></div><div class="glab" style="left:994px;top:377px">Artikel</div>
<div class="cmb" style="left:995px;top:400px;width:226px;height:23px"><i></i></div>
<div class="t" style="left:997px;top:402px;font-size:12px;line-height:20px;letter-spacing:0.19px;">2845</div>
<div class="btn" style="left:1229px;top:402px;width:87px;height:23px;line-height:22px">Suchen</div>
<div class="fld" style="left:995px;top:431px;width:323px;height:52px"></div>
<div style="position:absolute;left:1301px;top:432px;width:16px;height:50px;background:#f4f4f4"></div>
<svg style="position:absolute;left:1303px;top:436px" width="12" height="8" viewBox="0 0 12 8"><path d="M2 6.5 L6 2 L10 6.5" fill="none" stroke="#c4c4c4" stroke-width="1.4"/></svg>
<svg style="position:absolute;left:1303px;top:469px" width="12" height="8" viewBox="0 0 12 8"><path d="M2 1.5 L6 6 L10 1.5" fill="none" stroke="#c4c4c4" stroke-width="1.4"/></svg>
<div class="t" style="left:1000px;top:430px;font-size:12px;line-height:20px;letter-spacing:0.19px;">Test 45</div>
<div class="grp" style="left:987px;top:504px;width:341px;height:111px"></div><div class="glab" style="left:993px;top:497px">Charge</div>
<div class="t" style="left:996px;top:524px;font-size:12px;line-height:20px;letter-spacing:0.19px;">Chargen-Nr.:</div>
<div class="cmb" style="left:1121px;top:524px;width:100px;height:23px"><i></i></div>
<div class="btn" style="left:1228px;top:523px;width:87px;height:23px;line-height:22px">Anzeigen</div>
<div class="t" style="left:996px;top:552px;font-size:12px;line-height:20px;letter-spacing:0.19px;">Verfalldatum:</div>
<div class="fld" style="left:1121px;top:552px;width:99px;height:23px"></div>
<div class="t" style="left:995px;top:585px;font-size:12px;line-height:20px;letter-spacing:0.19px;">Charge Lieferant:</div>
<div class="fld" style="left:1121px;top:585px;width:99px;height:23px"></div>
<div class="grp" style="left:988px;top:626px;width:340px;height:156px"></div><div class="glab" style="left:994px;top:619px">Adresse</div>
<div class="t" style="left:1001px;top:643px;font-size:12px;line-height:20px;">Jahr / Nr:</div>
<div class="fld" style="left:1122px;top:641px;width:70px;height:23px"></div>
<div class="fld" style="left:1200px;top:641px;width:70px;height:23px"></div>
<div class="t" style="left:1002px;top:671px;font-size:12px;line-height:20px;letter-spacing:0.19px;">Name:</div>
<div class="fld" style="left:1122px;top:669px;width:195px;height:23px"></div>
<div class="t" style="left:1002px;top:698px;font-size:12px;line-height:20px;letter-spacing:0.19px;">Strasse:</div>
<div class="fld" style="left:1122px;top:696px;width:195px;height:23px"></div>
<div class="t" style="left:1002px;top:726px;font-size:12px;line-height:20px;word-spacing:-1px;letter-spacing:-0.05px;">Plz / Ort:</div>
<div class="fld" style="left:1122px;top:723px;width:195px;height:23px"></div>
<div class="t" style="left:1002px;top:751px;font-size:12px;line-height:20px;letter-spacing:0.19px;">Land:</div>
<div class="fld" style="left:1122px;top:750px;width:195px;height:23px"></div>
</body></html>
